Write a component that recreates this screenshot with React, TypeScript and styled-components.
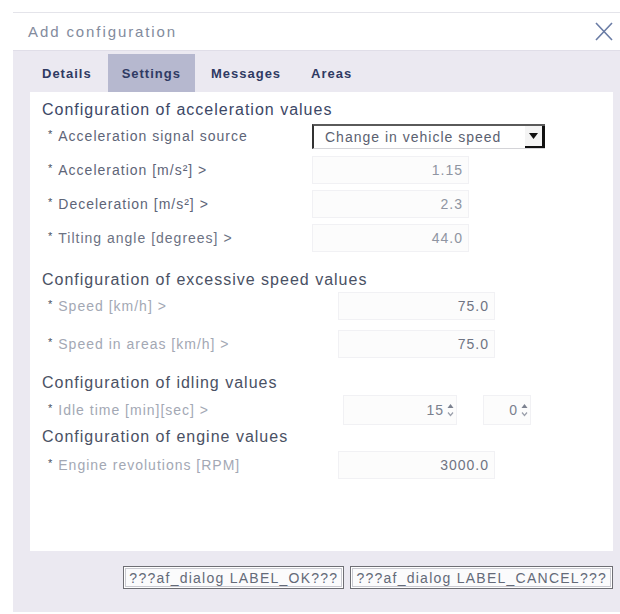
import styled, { createGlobalStyle } from "styled-components"

const GlobalStyle = createGlobalStyle`
  html, body {
    margin: 0;
    padding: 0;
    background: #ffffff;
  }
  body {
    font-family: "Liberation Sans", Arial, sans-serif;
  }
`

const Dialog = styled.div`
  margin: 12px 0 0 13px;
  width: 607px;
  border-top: 1px solid #e4e4ea;
  display: flex;
  flex-direction: column;
`

const Header = styled.div`
  height: 37px;
  display: flex;
  align-items: center;
  justify-content: space-between;
  padding: 0 7px 0 15px;
  background: #ffffff;
`

const Title = styled.span`
  font-size: 15px;
  letter-spacing: 1.9px;
  color: #838b9d;
`

const CloseButton = styled.button`
  width: 18px;
  height: 19px;
  padding: 0;
  border: none;
  background: transparent;
  display: flex;
  cursor: pointer;
`

const TabBar = styled.div`
  height: 42px;
  box-sizing: border-box;
  padding: 3px 0 0 15px;
  display: flex;
  gap: 2px;
  background: #ebe9f1;
  border-top: 1px solid #e0dee8;
`

const Tab = styled.div<{ $active?: boolean }>`
  height: 38px;
  padding: 0 14px;
  display: flex;
  align-items: center;
  font-size: 13px;
  font-weight: 700;
  letter-spacing: 1px;
  color: #2f3a63;
  background: ${p => (p.$active ? "#b6b8cf" : "transparent")};
`

const Body = styled.div`
  background: #ebe9f1;
  padding: 0 7px 0 17px;
`

const Panel = styled.div`
  height: 459px;
  box-sizing: border-box;
  padding: 8px 0 0 12px;
  background: #ffffff;
`

const Heading = styled.div<{ $top: number; $color?: string }>`
  margin-top: ${p => p.$top}px;
  font-size: 16px;
  line-height: 20px;
  letter-spacing: 1px;
  color: ${p => p.$color ?? "#3c4766"};
`

const RowList = styled.div<{ $top: number; $gap: number }>`
  margin-top: ${p => p.$top}px;
  padding-left: 6px;
  display: flex;
  flex-direction: column;
  gap: ${p => p.$gap}px;
`

const Row = styled.div<{ $labelWidth: number }>`
  height: 30px;
  display: grid;
  grid-template-columns: ${p => p.$labelWidth}px auto;
  align-items: center;
`

const Label = styled.span<{ $color: string }>`
  font-size: 14px;
  letter-spacing: 1px;
  color: ${p => p.$color};
  white-space: nowrap;
`

const Req = styled.span`
  display: inline-block;
  margin-right: 5px;
  font-size: 11px;
  vertical-align: 3px;
  color: #4a5060;
`

const NumberField = styled.div<{ $color: string }>`
  width: 157px;
  height: 28px;
  box-sizing: border-box;
  padding-right: 5px;
  display: flex;
  align-items: center;
  justify-content: flex-end;
  background: #fcfcfc;
  border: 1px solid #f1f1f4;
  font-size: 14px;
  letter-spacing: 1px;
  color: ${p => p.$color};
`

const Select = styled.div`
  width: 233px;
  height: 25px;
  box-sizing: border-box;
  display: flex;
  align-items: stretch;
  border-top: 2px solid #5a5a5a;
  border-left: 2px solid #333333;
  border-bottom: 1px solid #d4d4d8;
  background: #ffffff;
`

const SelectValue = styled.span`
  flex: 1;
  padding-left: 11px;
  display: flex;
  align-items: center;
  font-size: 14px;
  letter-spacing: 1px;
  color: #5b6170;
  white-space: nowrap;
`

const SelectArrow = styled.span`
  width: 20px;
  box-sizing: border-box;
  display: flex;
  align-items: center;
  justify-content: center;
  border-right: 3px solid #111111;
  border-bottom: 2px solid #111111;
  background: #f4f4f4;
`

const SpinnerGroup = styled.div`
  display: flex;
  align-items: center;
  gap: 26px;
  margin-left: 5px;
`

const Spinner = styled.div<{ $width: number }>`
  width: ${p => p.$width}px;
  height: 30px;
  box-sizing: border-box;
  padding-right: 2px;
  display: flex;
  align-items: center;
  justify-content: flex-end;
  gap: 3px;
  background: #fcfcfc;
  border: 1px solid #f1f1f4;
  font-size: 14px;
  letter-spacing: 1px;
  color: #7a808e;
`

const Footer = styled.div`
  height: 61px;
  box-sizing: border-box;
  padding: 15px 7px 0 0;
  display: flex;
  justify-content: flex-end;
  align-items: flex-start;
  gap: 6px;
  background: #ebe9f1;
`

const Button = styled.button`
  height: 23px;
  padding: 0 5px;
  border: 1px solid #6e6e74;
  box-shadow: inset 0 0 0 1px #ffffff, inset 0 0 0 2px #c9c9d0;
  background: #fbfbfc;
  font-family: "Liberation Sans", Arial, sans-serif;
  font-size: 14px;
  letter-spacing: 1.25px;
  color: #646a78;
  cursor: pointer;
`

function Arrows() {
  return (
    <svg width="7" height="14" viewBox="0 0 7 14">
      <path d="M0.5 5 L3.5 1 L6.5 5 Z" fill="#7c8290" />
      <path d="M1 9.5 L3.5 12.5 L6 9.5" fill="none" stroke="#9a9fab" strokeWidth="1.2" />
    </svg>
  )
}

type Field = { label: string; value: string; labelColor: string; valueColor: string }

const acceleration: Field[] = [
  { label: "Acceleration [m/s²] >", value: "1.15", labelColor: "#5e6578", valueColor: "#8f95a2" },
  { label: "Deceleration [m/s²] >", value: "2.3", labelColor: "#5e6578", valueColor: "#8f95a2" },
  { label: "Tilting angle [degrees] >", value: "44.0", labelColor: "#6c7283", valueColor: "#8f95a2" },
]

const speed: Field[] = [
  { label: "Speed [km/h] >", value: "75.0", labelColor: "#a3a8b4", valueColor: "#6f7483" },
  { label: "Speed in areas [km/h] >", value: "75.0", labelColor: "#a3a8b4", valueColor: "#6f7483" },
]

function FieldLabel({ text, color }: { text: string; color: string }) {
  return (
    <Label $color={color}>
      <Req>*</Req>
      {text}
    </Label>
  )
}

export default function App() {
  return (
    <>
      <GlobalStyle />
      <Dialog>
        <Header>
          <Title>Add configuration</Title>
          <CloseButton aria-label="close">
            <svg width="18" height="19" viewBox="0 0 18 19">
              <path d="M1 1 L17 18 M17 1 L1 18" stroke="#6a7ca5" strokeWidth="1.6" />
            </svg>
          </CloseButton>
        </Header>

        <TabBar>
          <Tab>Details</Tab>
          <Tab $active>Settings</Tab>
          <Tab>Messages</Tab>
          <Tab>Areas</Tab>
        </TabBar>

        <Body>
          <Panel>
            <Heading $top={0}>Configuration of acceleration values</Heading>
            <RowList $top={1} $gap={4}>
              <Row $labelWidth={264}>
                <FieldLabel text="Acceleration signal source" color="#5e6578" />
                <Select>
                  <SelectValue>Change in vehicle speed</SelectValue>
                  <SelectArrow>
                    <svg width="9" height="6" viewBox="0 0 9 6">
                      <path d="M0 0 H9 L4.5 6 Z" fill="#111111" />
                    </svg>
                  </SelectArrow>
                </Select>
              </Row>
              {acceleration.map(f => (
                <Row $labelWidth={264} key={f.label}>
                  <FieldLabel text={f.label} color={f.labelColor} />
                  <NumberField $color={f.valueColor}>{f.value}</NumberField>
                </Row>
              ))}
            </RowList>

            <Heading $top={17} $color="#4a5164">Configuration of excessive speed values</Heading>
            <RowList $top={1} $gap={8}>
              {speed.map(f => (
                <Row $labelWidth={290} key={f.label}>
                  <FieldLabel text={f.label} color={f.labelColor} />
                  <NumberField $color={f.valueColor}>{f.value}</NumberField>
                </Row>
              ))}
            </RowList>

            <Heading $top={14} $color="#4a5164">Configuration of idling values</Heading>
            <RowList $top={2} $gap={0}>
              <Row $labelWidth={290}>
                <FieldLabel text="Idle time [min][sec] >" color="#a3a8b4" />
                <SpinnerGroup>
                  <Spinner $width={114}>
                    15
                    <Arrows />
                  </Spinner>
                  <Spinner $width={48}>
                    0
                    <Arrows />
                  </Spinner>
                </SpinnerGroup>
              </Row>
            </RowList>

            <Heading $top={2} $color="#4a5164">Configuration of engine values</Heading>
            <RowList $top={3} $gap={0}>
              <Row $labelWidth={290}>
                <FieldLabel text="Engine revolutions [RPM]" color="#a3a8b4" />
                <NumberField $color="#6f7483">3000.0</NumberField>
              </Row>
            </RowList>
          </Panel>
        </Body>

        <Footer>
          <Button>???af_dialog LABEL_OK???</Button>
          <Button>???af_dialog LABEL_CANCEL???</Button>
        </Footer>
      </Dialog>
    </>
  )
}
